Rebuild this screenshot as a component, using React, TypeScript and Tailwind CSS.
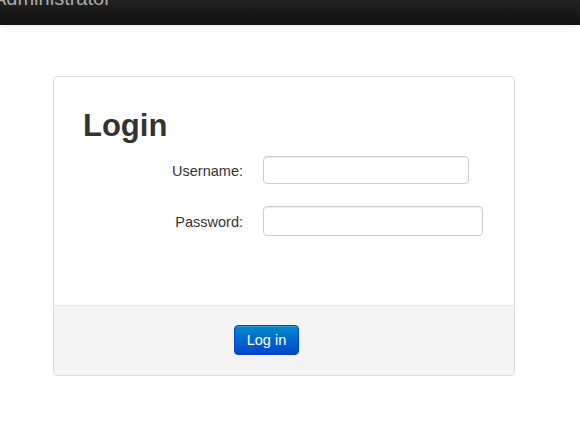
const fieldClass =
  'rounded-[4px] border border-[#cccccc] bg-white px-[6px] text-[14px] text-[#555] shadow-[inset_0_1px_1px_rgba(0,0,0,0.075)] outline-none';

const App = () => {
  return (
    <div className="min-h-[425px] bg-white font-['Liberation_Sans',Arial,sans-serif] text-[#333333]">
      <div className="h-[25px] overflow-hidden bg-gradient-to-b from-[#222222] to-[#111111] shadow-[0_1px_10px_rgba(0,0,0,0.1)]">
        <div className="-ml-[7px] -mt-[12px] text-[20px] leading-[20px] text-[#aaaaaa]">Administrator</div>
      </div>

      <div className="ml-[53px] mt-[51px] w-[462px] rounded-[4px] border border-[#dddddd] bg-white">
        <form className="h-[228px] px-[29px] pt-[29px]">
          <h1 className="text-[31px] font-bold leading-[40px] text-[#333333]">Login</h1>
          <div className="mt-[10px] flex items-center">
            <label className="w-[160px] pt-[3px] text-right text-[14.5px]">Username:</label>
            <input type="text" className={`${fieldClass} ml-[20px] h-[28px] w-[206px]`} />
          </div>
          <div className="mt-[22px] flex items-center">
            <label className="w-[160px] pt-[3px] text-right text-[14.5px]">Password:</label>
            <input type="password" className={`${fieldClass} ml-[20px] h-[30px] w-[220px]`} />
          </div>
        </form>
        <div className="rounded-b-[4px] border-t border-[#e5e5e5] bg-[#f4f4f4] pb-[20px] pl-[180px] pt-[19px]">
          <button
            type="button"
            className="h-[30px] w-[65px] rounded-[4px] border border-[#0044cc] bg-gradient-to-b from-[#0088cc] to-[#0044cc] pt-[1px] text-[14.5px] text-white shadow-[inset_0_1px_0_rgba(255,255,255,0.2)]"
          >
            Log in
          </button>
        </div>
      </div>
    </div>
  );
};

export default App;
